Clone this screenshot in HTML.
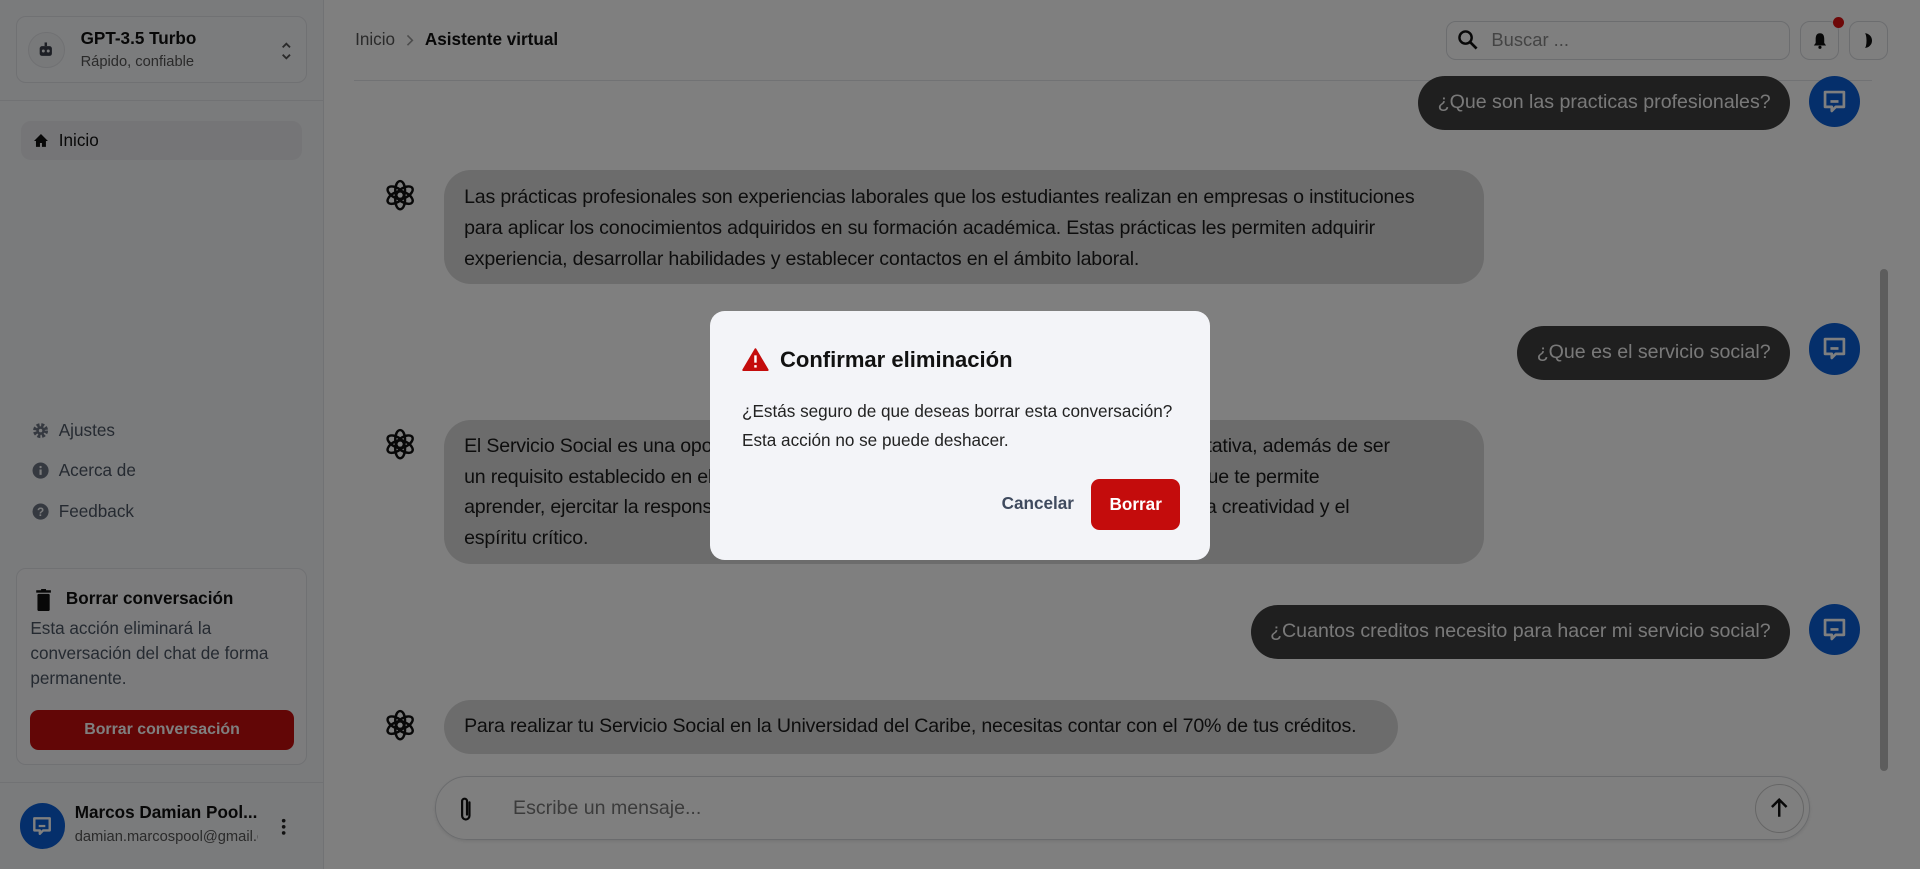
<!DOCTYPE html>
<html><head><meta charset="utf-8"><style>
html{zoom:1.22449}
*{box-sizing:border-box;margin:0;padding:0}
body{width:1568px;height:710px;overflow:hidden;position:relative;background:#fff;font-family:"Liberation Sans",Arial,sans-serif;color:#111}
.abs{position:absolute}
#side{left:0;top:0;width:265px;height:710px;background:#f5f6f8;border-right:1px solid #e2e4e8}
.card{border:1px solid #e0e2e6;border-radius:8px;background:#f7f8fa}
.nav{font-size:14px;color:#4b5563;display:flex;align-items:center;gap:8px}
.bubble{border-radius:22px;background:#d9d9d9;font-size:16px;line-height:25px;color:#1a1a1a;padding:0 16px;white-space:nowrap;letter-spacing:-0.15px}
.ub{background:#3f3f3f;color:#f2f2f2;border-radius:22px;font-size:16px;height:44px;line-height:44px;padding:0 16px;white-space:nowrap}
.av{width:42px;height:42px;border-radius:50%;background:#0a5fd6;display:flex;align-items:center;justify-content:center}
#ov{left:0;top:0;width:1568px;height:710px;background:rgba(0,0,0,0.5)}
</style></head><body>
<div id="side" class="abs">
 <div class="abs card" style="left:13px;top:13px;width:238px;height:55px">
  <div class="abs" style="left:9px;top:12px;width:30px;height:30px;border-radius:50%;border:1px solid #e0e2e6;background:#f1f2f4"></div>
  <svg class="abs" style="left:16px;top:19px" width="16" height="16" viewBox="0 0 16 16"><rect x="3" y="5" width="10" height="8" rx="2" fill="#3a3f4a"/><rect x="7" y="2" width="2" height="3" fill="#3a3f4a"/><circle cx="6" cy="9" r="1.2" fill="#f1f2f4"/><circle cx="10" cy="9" r="1.2" fill="#f1f2f4"/></svg>
  <div class="abs" style="left:52px;top:9px;font-size:14px;font-weight:600;color:#111">GPT-3.5 Turbo</div>
  <div class="abs" style="left:52px;top:30px;font-size:12px;color:#555">Rápido, confiable</div>
  <svg class="abs" style="left:214px;top:19px" width="12" height="18" viewBox="0 0 12 18"><path d="M3 6l3-3 3 3M3 12l3 3 3-3" stroke="#555" stroke-width="1.5" fill="none"/></svg>
 </div>
 <div class="abs" style="left:0;top:82px;width:265px;border-top:1px solid #e2e4e8"></div>
 <div class="abs nav" style="left:17px;top:99px;width:230px;height:32px;background:#eaebee;border-radius:8px;padding-left:10px;color:#111">
  <svg width="13" height="13" viewBox="0 0 16 16"><path d="M8 1L1 8h2v6h4v-4h2v4h4V8h2z" fill="#111"/></svg><span>Inicio</span></div>
 <div class="abs nav" style="left:26px;top:343px"><svg width="14" height="14" viewBox="0 0 16 16"><circle cx="8" cy="8" r="5" fill="none" stroke="#6b7280" stroke-width="4" stroke-dasharray="2.5 1.5"/><circle cx="8" cy="8" r="4" fill="#6b7280"/><circle cx="8" cy="8" r="1.6" fill="#f5f6f8"/></svg><span>Ajustes</span></div>
 <div class="abs nav" style="left:26px;top:376px"><svg width="14" height="14" viewBox="0 0 16 16"><circle cx="8" cy="8" r="7.5" fill="#6b7280"/><rect x="7" y="7" width="2" height="5" fill="#f5f6f8"/><circle cx="8" cy="4.7" r="1.1" fill="#f5f6f8"/></svg><span>Acerca de</span></div>
 <div class="abs nav" style="left:26px;top:409px"><svg width="14" height="14" viewBox="0 0 16 16"><circle cx="8" cy="8" r="7.5" fill="#6b7280"/><text x="8" y="12" font-size="11" font-weight="bold" text-anchor="middle" fill="#f5f6f8" font-family="Liberation Sans">?</text></svg><span>Feedback</span></div>
 <div class="abs card" style="left:13px;top:464px;width:238px;height:161px;background:#f8f9fb">
  <svg class="abs" style="left:15px;top:16px" width="14" height="18" viewBox="0 0 14 18"><rect x="1" y="1" width="12" height="2" fill="#111"/><rect x="5" y="0" width="4" height="2" fill="#111"/><rect x="2" y="4" width="10" height="14" rx="1" fill="#111"/></svg>
  <div class="abs" style="left:40px;top:15px;font-size:14px;font-weight:bold">Borrar conversación</div>
  <div class="abs" style="left:11px;top:38px;font-size:14px;line-height:20.5px;color:#4b5563;width:225px">Esta acción eliminará la conversación del chat de forma permanente.</div>
  <div class="abs" style="left:11px;top:115px;width:215px;height:33px;border-radius:7px;background:#c40c0c;color:#fff;font-size:13px;font-weight:bold;text-align:center;line-height:33px">Borrar conversación</div>
 </div>
 <div class="abs" style="left:0;top:639px;width:265px;border-top:1px solid #e2e4e8"></div>
 <div class="abs av" style="left:16px;top:656px;width:37px;height:37px"><svg width="18" height="18" viewBox="0 0 20 20"><path d="M3 3h14v11H11l-3 3v-3H3z" fill="none" stroke="#fff" stroke-width="2.2" stroke-linejoin="round"/><path d="M7 10h6" stroke="#fff" stroke-width="2"/></svg></div>
 <div class="abs" style="left:61px;top:655px;font-size:14px;font-weight:600">Marcos Damian Pool...</div>
 <div class="abs" style="left:61px;top:677px;font-size:12px;color:#555;width:150px;overflow:hidden;white-space:nowrap">damian.marcospool@gmail.com</div>
 <svg class="abs" style="left:229px;top:667px" width="6" height="16" viewBox="0 0 6 16"><circle cx="3" cy="3" r="1.5" fill="#222"/><circle cx="3" cy="8" r="1.5" fill="#222"/><circle cx="3" cy="13" r="1.5" fill="#222"/></svg>
</div>

<div class="abs" style="left:290px;top:24px;font-size:14px;color:#555">Inicio</div>
<svg class="abs" style="left:331px;top:27px" width="8" height="12" viewBox="0 0 8 12"><path d="M2 2l4 4-4 4" stroke="#999" stroke-width="1.3" fill="none"/></svg>
<div class="abs" style="left:347px;top:24px;font-size:14px;font-weight:bold">Asistente virtual</div>
<div class="abs" style="left:1181px;top:17px;width:281px;height:32px;border:1px solid #d8dadf;border-radius:8px"></div>
<svg class="abs" style="left:1190px;top:24px" width="18" height="18" viewBox="0 0 18 18"><circle cx="7" cy="7" r="5" stroke="#111" stroke-width="2" fill="none"/><path d="M11 11l5 5" stroke="#111" stroke-width="2.2"/></svg>
<div class="abs" style="left:1218px;top:24px;font-size:15px;color:#888">Buscar ...</div>
<div class="abs" style="left:1470px;top:17px;width:32px;height:32px;border:1px solid #d8dadf;border-radius:8px"></div>
<svg class="abs" style="left:1480px;top:26px" width="13" height="14" viewBox="0 0 13 14"><path d="M6.5 1C3.5 1 3 3.5 3 6v3L1.5 11h10L10 9V6c0-2.5-.5-5-3.5-5z" fill="#111"/><circle cx="6.5" cy="12.5" r="1.3" fill="#111"/></svg>
<div class="abs" style="left:1497px;top:14px;width:9px;height:9px;border-radius:50%;background:#d11"></div>
<div class="abs" style="left:1510px;top:17px;width:32px;height:32px;border:1px solid #d8dadf;border-radius:8px"></div>
<svg class="abs" style="left:1520px;top:26px" width="12" height="14" viewBox="0 0 12 14"><path d="M3 1A6 6 0 0 1 3 13A1.5 6 0 0 0 3 1z" fill="#111"/></svg>
<div class="abs" style="left:289px;top:65px;width:1240px;border-top:1px solid #e3e5e8"></div>
<div class="abs" style="left:1535px;top:220px;width:7px;height:410px;border-radius:4px;background:#bbb"></div>

<svg width="0" height="0" style="position:absolute"><defs><g id="oai"><g fill="none" stroke="#111" stroke-width="2"><ellipse cx="0" cy="-4" rx="4" ry="7.5" transform="rotate(0)"/><ellipse cx="0" cy="-4" rx="4" ry="7.5" transform="rotate(60)"/><ellipse cx="0" cy="-4" rx="4" ry="7.5" transform="rotate(120)"/><ellipse cx="0" cy="-4" rx="4" ry="7.5" transform="rotate(180)"/><ellipse cx="0" cy="-4" rx="4" ry="7.5" transform="rotate(240)"/><ellipse cx="0" cy="-4" rx="4" ry="7.5" transform="rotate(300)"/></g></g></defs></svg>
<svg class="abs" style="left:313px;top:145px" width="28" height="28" viewBox="-14 -14 28 28"><use href="#oai"/></svg>
<svg class="abs" style="left:313px;top:349px" width="28" height="28" viewBox="-14 -14 28 28"><use href="#oai"/></svg>
<svg class="abs" style="left:313px;top:578px" width="28" height="28" viewBox="-14 -14 28 28"><use href="#oai"/></svg>

<div class="abs ub" style="right:106px;top:62px">¿Que son las practicas profesionales?</div>
<div class="abs ub" style="right:106px;top:266px">¿Que es el servicio social?</div>
<div class="abs ub" style="right:106px;top:494px">¿Cuantos creditos necesito para hacer mi servicio social?</div>
<div class="abs av" style="left:1477px;top:62px"><svg width="22" height="22" viewBox="0 0 20 20"><path d="M3 3h14v11H11l-3 3v-3H3z" fill="none" stroke="#fff" stroke-width="2" stroke-linejoin="round"/><path d="M7 10h6" stroke="#fff" stroke-width="2"/></svg></div>
<div class="abs av" style="left:1477px;top:264px"><svg width="22" height="22" viewBox="0 0 20 20"><path d="M3 3h14v11H11l-3 3v-3H3z" fill="none" stroke="#fff" stroke-width="2" stroke-linejoin="round"/><path d="M7 10h6" stroke="#fff" stroke-width="2"/></svg></div>
<div class="abs av" style="left:1477px;top:493px"><svg width="22" height="22" viewBox="0 0 20 20"><path d="M3 3h14v11H11l-3 3v-3H3z" fill="none" stroke="#fff" stroke-width="2" stroke-linejoin="round"/><path d="M7 10h6" stroke="#fff" stroke-width="2"/></svg></div>

<div class="abs bubble" style="left:363px;top:139px;width:849px;height:93px;padding-top:10px">Las prácticas profesionales son experiencias laborales que los estudiantes realizan en empresas o instituciones<br>para aplicar los conocimientos adquiridos en su formación académica. Estas prácticas les permiten adquirir<br>experiencia, desarrollar habilidades y establecer contactos en el ámbito laboral.</div>
<div class="abs bubble" style="left:363px;top:343px;width:849px;height:118px;padding-top:9px">El Servicio Social es una oportunidad para contribuir al desarrollo de una sociedad equitativa, además de ser<br>un requisito establecido en el reglamento de la universidad. Es una formación integral que te permite<br>aprender, ejercitar la responsabilidad social y desarrollar valores como la proactividad, la creatividad y el<br>espíritu crítico.</div>
<div class="abs bubble" style="left:363px;top:572px;width:779px;height:44px;line-height:44px">Para realizar tu Servicio Social en la Universidad del Caribe, necesitas contar con el 70% de tus créditos.</div>

<div class="abs" style="left:355px;top:634px;width:1123px;height:52px;border:1px solid #d5d7db;border-radius:26px;box-shadow:0 1px 3px rgba(0,0,0,.1)"></div>
<svg class="abs" style="left:372px;top:649px" width="16" height="24" viewBox="0 0 16 24"><path d="M11 6v11a3 3 0 0 1-6 0V5a2 2 0 0 1 4 0v11" stroke="#111" stroke-width="1.8" fill="none" stroke-linecap="round"/></svg>
<div class="abs" style="left:419px;top:651px;font-size:16px;color:#777">Escribe un mensaje...</div>
<div class="abs" style="left:1433px;top:640px;width:40px;height:40px;border-radius:50%;border:1px solid #ccc"></div>
<svg class="abs" style="left:1443px;top:650px" width="20" height="20" viewBox="0 0 20 20"><path d="M10 17V3M4 9l6-6 6 6" stroke="#111" stroke-width="2" fill="none"/></svg>

<div id="ov" class="abs"></div>

<div class="abs" style="left:580px;top:254px;width:408px;height:203px;background:#f3f4f8;border-radius:12px">
 <svg class="abs" style="left:26px;top:30px" width="22" height="19" viewBox="0 0 22 19"><path d="M11 1L1 18h20z" fill="#c40c0c" stroke="#c40c0c" stroke-width="1.5" stroke-linejoin="round"/><rect x="10" y="6" width="2" height="6" fill="#fff"/><rect x="10" y="14" width="2" height="2" fill="#fff"/></svg>
 <div class="abs" style="left:57px;top:29px;font-size:18px;font-weight:bold;color:#111">Confirmar eliminación</div>
 <div class="abs" style="left:26px;top:70px;font-size:14px;line-height:24px;color:#222">¿Estás seguro de que deseas borrar esta conversación?<br>Esta acción no se puede deshacer.</div>
 <div class="abs" style="left:238px;top:149px;font-size:14px;font-weight:600;color:#3f4a5e">Cancelar</div>
 <div class="abs" style="left:311px;top:137px;width:73px;height:42px;border-radius:7px;background:#c40c0c;color:#fff;font-size:14px;font-weight:bold;text-align:center;line-height:42px">Borrar</div>
</div>
</body></html>
